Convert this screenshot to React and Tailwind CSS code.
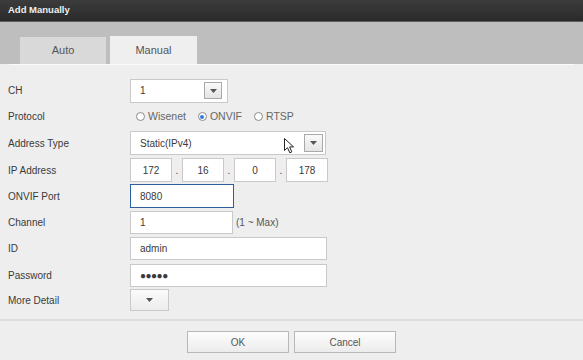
import React from "react";

const font = { fontFamily: '"Liberation Sans", Arial, sans-serif' };

function DropBtn({ className = "" }) {
  return (
    <div
      className={
        "flex items-center justify-center border border-[#a9a9a9] bg-gradient-to-b from-[#fafafa] to-[#e4e4e4] " +
        className
      }
    >
      <svg width="7" height="4" viewBox="0 0 7 4">
        <path d="M0 0 L7 0 L3.5 4 Z" fill="#555" />
      </svg>
    </div>
  );
}

function Label({ children }) {
  return <div className="w-[130px] shrink-0 pl-[8px] text-[10px] text-[#3a3a3a]">{children}</div>;
}

function Radio({ checked, label }) {
  return (
    <div className="flex items-center gap-[3px]">
      <span className="flex h-[9px] w-[9px] items-center justify-center rounded-full border border-[#8a8a8a] bg-white">
        {checked && <span className="h-[4px] w-[4px] rounded-full bg-[#2f7be0]" />}
      </span>
      <span className="text-[10.5px] text-[#666]">{label}</span>
    </div>
  );
}

const inputCls =
  "flex items-center border border-[#c9c9c9] bg-white px-[9px] text-[10px] text-[#3a3a3a]";

export default function App() {
  return (
    <div className="relative h-[360px] w-[583px] overflow-hidden bg-[#eeeeee]" style={font}>
      {/* title bar */}
      <div className="flex h-[21px] items-center bg-gradient-to-b from-[#3c3c3c] to-[#2a2a2a] pl-[8px] text-[9.5px] font-bold text-[#f0f0f0]">
        Add Manually
      </div>
      <div className="h-[1px] bg-[#5c5c5c]" />
      {/* tab area */}
      <div className="flex h-[42px] items-end gap-[4px] bg-[#bebebe] pl-[20px]">
        <div className="flex h-[27px] w-[86px] items-center justify-center bg-[#d9d9d9] text-[11px] text-[#555]">
          Auto
        </div>
        <div className="flex h-[28px] w-[87px] items-center justify-center bg-[#efefef] text-[11px] text-[#555]">
          Manual
        </div>
      </div>
      <div className="ml-[9px] mr-[9px] h-[1px] bg-[#fbfbfb]" />

      {/* form */}
      <div className="mt-[12px] flex flex-col">
        <div className="flex h-[27px] items-center">
          <Label>CH</Label>
          <div className={inputCls + " h-[24px] w-[98px] justify-between pr-[5px]"}>
            <span>1</span>
            <DropBtn className="h-[17px] w-[18px]" />
          </div>
        </div>
        <div className="flex h-[25px] items-center">
          <Label>Protocol</Label>
          <div className="flex items-center gap-[12px] pl-[6px]">
            <Radio label="Wisenet" />
            <Radio checked label="ONVIF" />
            <Radio label="RTSP" />
          </div>
        </div>
        <div className="flex h-[28px] items-center">
          <Label>Address Type</Label>
          <div className={inputCls + " h-[24px] w-[196px] justify-between pr-[2px]"}>
            <span>Static(IPv4)</span>
            <DropBtn className="h-[18px] w-[19px]" />
          </div>
        </div>
        <div className="flex h-[26px] items-center">
          <Label>IP Address</Label>
          <div className="flex items-center">
            {["172", "16", "0", "178"].map((v, i) => (
              <React.Fragment key={i}>
                {i > 0 && (
                  <span className="w-[10px] text-center text-[10px] text-[#444]">.</span>
                )}
                <div className={inputCls + " h-[24px] w-[42px] justify-center px-0"}>{v}</div>
              </React.Fragment>
            ))}
          </div>
        </div>
        <div className="flex h-[26px] items-center">
          <Label>ONVIF Port</Label>
          <div className="flex h-[24px] w-[104px] items-center border border-[#2c5d9c] bg-white px-[9px] text-[10px] text-[#3a3a3a]">
            8080
          </div>
        </div>
        <div className="flex h-[26px] items-center">
          <Label>Channel</Label>
          <div className={inputCls + " h-[23px] w-[103px]"}>1</div>
          <span className="ml-[3px] text-[10px] text-[#555]">(1 ~ Max)</span>
        </div>
        <div className="flex h-[27px] items-center">
          <Label>ID</Label>
          <div className={inputCls + " h-[23px] w-[197px]"}>admin</div>
        </div>
        <div className="flex h-[26px] items-center">
          <Label>Password</Label>
          <div className={inputCls + " h-[23px] w-[197px] text-[8px] tracking-[-0.5px]"}>●●●●●</div>
        </div>
        <div className="flex h-[24px] items-center">
          <Label>More Detail</Label>
          <div className="flex h-[22px] w-[39px] items-center justify-center border border-[#c9c9c9] bg-gradient-to-b from-[#fbfbfb] to-[#ececec]">
            <svg width="7" height="4" viewBox="0 0 7 4">
              <path d="M0 0 L7 0 L3.5 4 Z" fill="#555" />
            </svg>
          </div>
        </div>
      </div>

      <div className="mt-[7px] h-[2px] bg-[#dcdcdc]" />
      <div className="mt-[10px] flex justify-center gap-[5px]">
        <div className="flex h-[22px] w-[102px] items-center justify-center border border-[#b8b8b8] bg-gradient-to-b from-[#fdfdfd] to-[#ececec] text-[10px] text-[#555]">
          OK
        </div>
        <div className="flex h-[22px] w-[102px] items-center justify-center border border-[#b8b8b8] bg-gradient-to-b from-[#fdfdfd] to-[#ececec] text-[10px] text-[#555]">
          Cancel
        </div>
      </div>

      {/* mouse cursor overlay */}
      <svg className="absolute left-[284px] top-[138px]" width="11" height="16" viewBox="0 0 11 16">
        <path
          d="M0.5 0.5 L0.5 12.5 L3.5 9.7 L5.8 14.8 L7.8 13.9 L5.6 8.9 L9.5 8.9 Z"
          fill="#fff"
          stroke="#222"
          strokeWidth="1"
          strokeLinejoin="round"
        />
      </svg>
    </div>
  );
}
